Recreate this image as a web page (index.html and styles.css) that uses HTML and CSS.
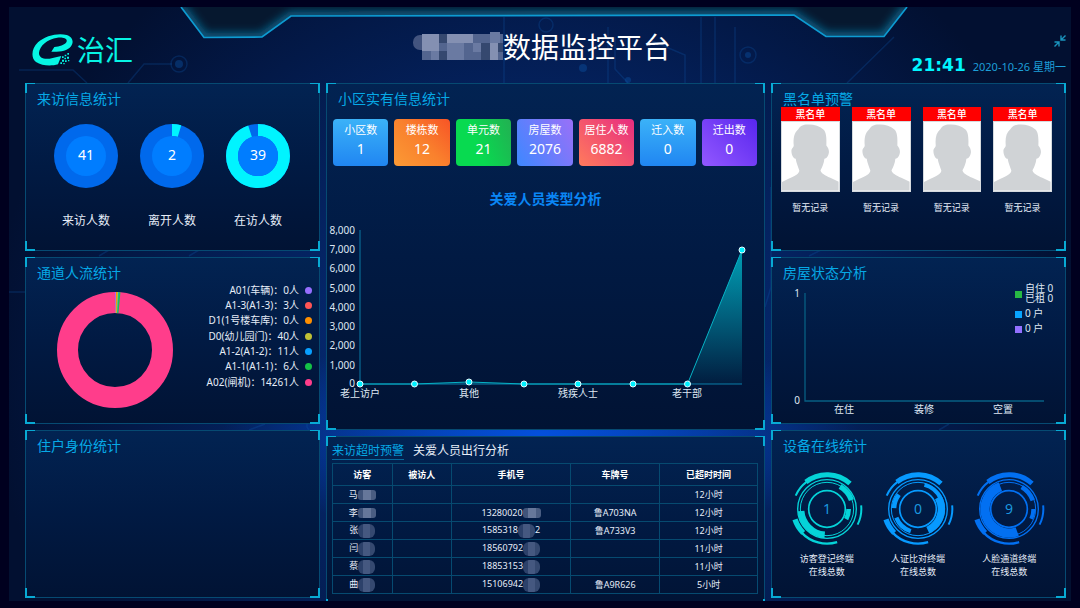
FILE: index.html
```html
<!DOCTYPE html>
<html lang="zh-CN">
<head>
<meta charset="utf-8">
<meta name="viewport" content="width=device-width, initial-scale=1">
<title>数据监控平台</title>
<link rel="stylesheet" href="styles.css">
</head>
<body>
<div class="stage">
  <svg class="traces" viewBox="0 0 1062 594" preserveAspectRatio="none" aria-hidden="true">
    <g fill="none" stroke="#0d55a8" stroke-opacity=".28" stroke-width="1.5">
      <path d="M119 76 135 57H163M495 10V76M599 20V76M606 30V62L619 76M643 34 676 48V76M692 10V76M706 10V76M726 20V76M78 76 64 63H10M885 30 838 76"/>
      <circle cx="170" cy="57" r="8"/><circle cx="218" cy="18" r="6"/><circle cx="739" cy="48" r="8"/><circle cx="537" cy="18" r="7"/>
      <path d="M0 285H16M298 250V420L304 430M90 249 100 243M180 249 190 243M240 423 256 417M800 249 812 243H860M930 423 940 417M756 300 762 280V180"/>
    </g>
    <g fill="#0d55a8" fill-opacity=".4"><circle cx="170" cy="57" r="4"/><circle cx="574" cy="61" r="4"/><circle cx="739" cy="48" r="3"/><circle cx="619" cy="73" r="3"/></g>
  </svg>
  <svg class="crest" viewBox="0 0 1062 34" preserveAspectRatio="none" aria-hidden="true">
    <defs>
      <clipPath id="crestClip"><path d="M172 0 195 30.500 253 30 282 9 785 8 817 29.500H875L898 0Z"/></clipPath>
      <filter id="soft" x="-10%" y="-100%" width="120%" height="300%"><feGaussianBlur stdDeviation="4"/></filter>
    </defs>
    <g clip-path="url(#crestClip)">
      <path d="M172 0H898V34H172Z" fill="#06182f"/>
      <path d="M172 0 195 30.500 253 30 282 9 785 8 817 29.500H875L898 0" fill="none" stroke="#0b6288" stroke-width="9" filter="url(#soft)"/>
    </g>
    <path d="M172 0 195 30.500 253 30 282 9 785 8 817 29.500H875L898 0" fill="none" stroke="#0d9bd2" stroke-width="1.700"/>
  </svg>

  <header class="header">
    <div class="logo">
      <svg class="logo-mark" viewBox="0 0 126 96" aria-hidden="true">
        <path fill="#06f5e4" d="M58 53 67 39C82 38 98 33 103 25 109 13 92 9 76 11 46 15 23 35 21 56 20 74 40 78 62 72L88 66 78 91C58 97 30 96 12 84-4 72-2 44 18 25 40 4 80-4 104 3 124 9 126 26 116 38 106 50 84 54 58 53Z"/>
        <path fill="#06f5e4" d="M90 67h5v5h-5zM98 62h5v5h-5zM106 57h5v5h-5zM97 71h5v5h-5zM105 68h6v6h-6zM90 77h6v6h-6zM99 79h5v5h-5zM85 85h5v5h-5zM108 78h4v4h-4zM94 87h4v4h-4z"/>
      </svg>
      <span class="logo-name">治汇</span>
    </div>
    <h1 class="headline">
      <svg class="headline-mask" viewBox="0 0 90 30" aria-hidden="true">
        <rect x="0" y="3" width="20" height="15" rx="7" fill="#43547f"/>
        <rect x="9" y="2" width="81" height="26" fill="#53658f"/>
        <path fill="#8490b2" d="M9 2h17v17H9zM34 2h26v9H34zM77 11h8v17h-8z"/>
        <path fill="#6a7aa2" d="M34 11h17v17H34zM60 11h8v9h-8zM18 19h8v9h-8zM77 0h10v11H77z"/>
        <path fill="#35486f" d="M26 2h8v9h-8zM26 19h8v9h-8zM68 11h9v17h-9zM85 11h5v9h-5z"/>
      </svg><span>数据监控平台</span>
    </h1>
    <div class="header-side">
      <button class="shrink" type="button" aria-label="退出全屏">
        <svg viewBox="0 0 12 12" aria-hidden="true"><path d="M11.500.500 7.500 4.500M7 .500V5H11.500M.500 11.500 4.500 7.500M.500 7H5V11.500" fill="none" stroke="currentColor" stroke-width="1.400"/></svg>
      </button>
      <div class="clock"><time class="clock-time">21:41</time><span class="clock-date">2020-10-26 星期一</span></div>
    </div>
  </header>

  <main class="board">
    <div class="column">
      <section class="panel">
        <h2 class="panel-title">来访信息统计</h2>
        <div class="visits">
          <figure class="visit">
            <svg viewBox="0 0 64 64"><circle cx="32" cy="32" r="32" fill="#0069ec"/><circle cx="32" cy="32" r="20" fill="#007dff"/><text class="ring-number" x="32" y="36">41</text></svg>
            <figcaption>来访人数</figcaption>
          </figure>
          <figure class="visit">
            <svg viewBox="0 0 64 64"><circle cx="32" cy="32" r="32" fill="#0069ec"/><circle class="slice" cx="32" cy="32" r="26" pathLength="360" stroke="#00f4ff" stroke-width="12" stroke-dasharray="17 343" transform="rotate(-90 32 32)"/><circle cx="32" cy="32" r="20" fill="#007dff"/><text class="ring-number" x="32" y="36">2</text></svg>
            <figcaption>离开人数</figcaption>
          </figure>
          <figure class="visit">
            <svg viewBox="0 0 64 64"><circle cx="32" cy="32" r="32" fill="#0069ec"/><circle class="slice" cx="32" cy="32" r="26" pathLength="360" stroke="#00f4ff" stroke-width="12" stroke-dasharray="342 18" transform="rotate(-90 32 32)"/><circle cx="32" cy="32" r="20" fill="#007dff"/><text class="ring-number" x="32" y="36">39</text></svg>
            <figcaption>在访人数</figcaption>
          </figure>
        </div>
      </section>

      <section class="panel">
        <h2 class="panel-title">通道人流统计</h2>
        <div class="flow">
          <svg class="flow-ring" viewBox="0 0 116 116" role="img" aria-label="通道人流">
            <g class="slice" stroke-width="21" transform="rotate(-90 58 58)">
              <circle cx="58" cy="58" r="47.500" stroke="#ff3d8b"/>
              <circle cx="58" cy="58" r="47.500" pathLength="360" stroke="#1fc24c" stroke-dasharray="5.500 354.500"/>
              <circle cx="58" cy="58" r="47.500" pathLength="360" stroke="#08a0f8" stroke-dasharray="3.700 356.300"/>
              <circle cx="58" cy="58" r="47.500" pathLength="360" stroke="#c0c030" stroke-dasharray="3.200 356.800"/>
              <circle cx="58" cy="58" r="47.500" pathLength="360" stroke="#ff8f00" stroke-dasharray="2 358"/>
              <circle cx="58" cy="58" r="47.500" pathLength="360" stroke="#9a6cff" stroke-dasharray="1 359"/>
            </g>
          </svg>
          <ul class="flow-legend">
            <li>A01(车辆)：0人<i class="dot purple"></i></li>
            <li>A1-3(A1-3)：3人<i class="dot red"></i></li>
            <li>D1(1号楼车库)：0人<i class="dot orange"></i></li>
            <li>D0(幼儿园门)：40人<i class="dot olive"></i></li>
            <li>A1-2(A1-2)：11人<i class="dot blue"></i></li>
            <li>A1-1(A1-1)：6人<i class="dot green"></i></li>
            <li>A02(闸机)：14261人<i class="dot pink"></i></li>
          </ul>
        </div>
      </section>

      <section class="panel">
        <h2 class="panel-title">住户身份统计</h2>
      </section>
    </div>

    <div class="column column-center">
      <section class="panel panel-main">
        <h2 class="panel-title">小区实有信息统计</h2>
        <dl class="totals">
          <div class="total sky"><dt>小区数</dt><dd>1</dd></div>
          <div class="total amber"><dt>楼栋数</dt><dd>12</dd></div>
          <div class="total leaf"><dt>单元数</dt><dd>21</dd></div>
          <div class="total iris"><dt>房屋数</dt><dd>2076</dd></div>
          <div class="total rose"><dt>居住人数</dt><dd>6882</dd></div>
          <div class="total sky"><dt>迁入数</dt><dd>0</dd></div>
          <div class="total violet"><dt>迁出数</dt><dd>0</dd></div>
        </dl>
        <h3 class="chart-title">关爱人员类型分析</h3>
        <svg class="chart" viewBox="0 0 437 220" role="img" aria-label="关爱人员类型分析">
          <defs><linearGradient id="area" x1="0" y1="0" x2="0" y2="1"><stop offset="0" stop-color="#00b6c8" stop-opacity=".85"/><stop offset="1" stop-color="#00b6c8" stop-opacity=".05"/></linearGradient></defs>
          <path d="M33 21V175H415" fill="none" stroke="#075a83" stroke-width="1.500"/>
          <path d="M33 175H87.500L142 173 197 175H360.500L415 41V175Z" fill="url(#area)"/>
          <path d="M33 175H87.500L142 173 197 175H360.500L415 41" fill="none" stroke="#06b3c6" stroke-width="1"/>
          <g class="axis-text end"><text x="28" y="25">8,000</text><text x="28" y="44">7,000</text><text x="28" y="63">6,000</text><text x="28" y="83">5,000</text><text x="28" y="102">4,000</text><text x="28" y="121">3,000</text><text x="28" y="140">2,000</text><text x="28" y="160">1,000</text><text x="28" y="178">0</text></g>
          <g class="points"><circle cx="33" cy="175" r="3"/><circle cx="87.500" cy="175" r="3"/><circle cx="142" cy="173" r="3"/><circle cx="197" cy="175" r="3"/><circle cx="251" cy="175" r="3"/><circle cx="306" cy="175" r="3"/><circle cx="360.500" cy="175" r="3"/><circle cx="415" cy="41" r="3"/></g>
          <g class="axis-text middle"><text x="33" y="188">老上访户</text><text x="142" y="188">其他</text><text x="251" y="188">残疾人士</text><text x="360" y="188">老干部</text></g>
        </svg>
      </section>

      <section class="panel panel-alerts">
        <div class="tabs" role="tablist">
          <button class="tab active" type="button" role="tab" aria-selected="true">来访超时预警</button>
          <button class="tab" type="button" role="tab" aria-selected="false">关爱人员出行分析</button>
        </div>
        <table class="alerts">
          <colgroup><col class="w-name"><col class="w-name"><col class="w-phone"><col class="w-plate"><col class="w-time"></colgroup>
          <thead><tr><th>访客</th><th>被访人</th><th>手机号</th><th>车牌号</th><th>已超时时间</th></tr></thead>
          <tbody>
            <tr><td>马<i class="mask bar"></i></td><td></td><td></td><td></td><td>12小时</td></tr>
            <tr><td>李<i class="mask bar"></i></td><td></td><td>13280020<i class="mask bar"></i></td><td>鲁A703NA</td><td>12小时</td></tr>
            <tr><td>张<i class="mask disc"></i></td><td></td><td>1585318<i class="mask disc"></i>2</td><td>鲁A733V3</td><td>12小时</td></tr>
            <tr><td>闫<i class="mask disc"></i></td><td></td><td>18560792<i class="mask disc"></i></td><td></td><td>11小时</td></tr>
            <tr><td>蔡<i class="mask disc"></i></td><td></td><td>18853153<i class="mask disc"></i></td><td></td><td>11小时</td></tr>
            <tr><td>曲<i class="mask disc"></i></td><td></td><td>15106942<i class="mask disc"></i></td><td>鲁A9R626</td><td>5小时</td></tr>
          </tbody>
        </table>
      </section>
    </div>

    <div class="column">
      <section class="panel">
        <h2 class="panel-title">黑名单预警</h2>
        <svg class="symbols" aria-hidden="true">
          <symbol id="person" viewBox="0 0 174 211"><path fill="#d0d3d6" d="M0 211V184L20 174C40 166 54 158 53 148 50 140 44 126 42 113 33 112 28 96 29 86 30 80 36 78 36 72 34 50 37 33 50 22 58 9 70 8 82 8 100 8 116 14 126 22 136 29 137 50 136 72 141 78 144 84 144 92 143 102 138 112 130 113 128 128 124 138 118 148 120 158 132 164 148 171L174 183V211Z"/></symbol>
        </svg>
        <ul class="blacklist">
          <li><strong>黑名单</strong><svg class="photo" viewBox="0 0 174 211"><use href="#person"/></svg><span>暂无记录</span></li>
          <li><strong>黑名单</strong><svg class="photo" viewBox="0 0 174 211"><use href="#person"/></svg><span>暂无记录</span></li>
          <li><strong>黑名单</strong><svg class="photo" viewBox="0 0 174 211"><use href="#person"/></svg><span>暂无记录</span></li>
          <li><strong>黑名单</strong><svg class="photo" viewBox="0 0 174 211"><use href="#person"/></svg><span>暂无记录</span></li>
        </ul>
      </section>

      <section class="panel">
        <h2 class="panel-title">房屋状态分析</h2>
        <svg class="chart" viewBox="0 0 293 140" role="img" aria-label="房屋状态分析">
          <path d="M33 10V118H272" fill="none" stroke="#075f83" stroke-width="1.300"/>
          <g class="axis-text end"><text x="28" y="14">1</text><text x="28" y="121">0</text></g>
          <g class="axis-text middle"><text x="72" y="130">在住</text><text x="152" y="130">装修</text><text x="231" y="130">空置</text></g>
          <rect x="243" y="8" width="7" height="7" fill="#28b844"/><rect x="243" y="28" width="7" height="7" fill="#08a4ff"/><rect x="243" y="43" width="7" height="7" fill="#9270ff"/>
          <g class="axis-text"><text x="253" y="9">自住 0</text><text x="253" y="19">已租 0</text><text x="253" y="34">0 户</text><text x="253" y="49">0 户</text></g>
        </svg>
      </section>

      <section class="panel">
        <h2 class="panel-title">设备在线统计</h2>
        <svg class="symbols" aria-hidden="true">
          <symbol id="dial" viewBox="-111 -111 222 222">
            <g class="slice" stroke="currentColor">
              <circle r="103" stroke-width="15" pathLength="360" stroke-dasharray="80 280" transform="rotate(-128)"/>
              <circle r="102" stroke-width="6" pathLength="360" stroke-dasharray="30 330" transform="rotate(-157)"/>
              <circle r="101" stroke-width="16" pathLength="360" stroke-dasharray="27 333" transform="rotate(135)"/>
              <circle r="104" stroke-width="7" pathLength="360" stroke-dasharray="64 296" transform="rotate(73)"/>
              <circle r="103" stroke-width="6" pathLength="360" stroke-dasharray="33 327" transform="rotate(-6)"/>
              <circle r="88" stroke-width="4"/><circle r="80" stroke-width="3"/><circle r="55" stroke-width="5"/>
            </g>
          </symbol>
        </svg>
        <div class="devices">
          <figure class="device teal">
            <svg viewBox="-111 -111 222 222">
              <use href="#dial" x="-111" y="-111" width="222" height="222"/>
              <g class="slice" stroke="currentColor"><circle r="78" stroke-width="16" pathLength="360" stroke-dasharray="40 320" transform="rotate(-60)"/><circle r="78" stroke-width="20" pathLength="360" stroke-dasharray="80 280" transform="rotate(95)"/><circle r="65" stroke-width="14" pathLength="360" stroke-dasharray="28 332"/></g>
              <text class="dial-number" y="15">1</text>
            </svg>
            <figcaption>访客登记终端<br>在线总数</figcaption>
          </figure>
          <figure class="device azure">
            <svg viewBox="-111 -111 222 222">
              <use href="#dial" x="-111" y="-111" width="222" height="222"/>
              <g class="slice" stroke="currentColor"><circle r="75" stroke-width="12" pathLength="360" stroke-dasharray="50 310" transform="rotate(-75)"/><circle r="70" stroke-width="22" pathLength="360" stroke-dasharray="95 265" transform="rotate(-30)"/><circle r="70" stroke-width="13" pathLength="360" stroke-dasharray="50 310" transform="rotate(108)"/><circle r="72" stroke-width="14" pathLength="360" stroke-dasharray="35 325" transform="rotate(182)"/></g>
              <text class="dial-number" y="15">0</text>
            </svg>
            <figcaption>人证比对终端<br>在线总数</figcaption>
          </figure>
          <figure class="device royal">
            <svg viewBox="-111 -111 222 222">
              <use href="#dial" x="-111" y="-111" width="222" height="222"/>
              <g class="slice" stroke="currentColor"><circle r="72" stroke-width="28" pathLength="360" stroke-dasharray="178 182" transform="rotate(70)"/><circle r="76" stroke-width="14" pathLength="360" stroke-dasharray="40 320" transform="rotate(-60)"/><circle r="73" stroke-width="12" pathLength="360" stroke-dasharray="24 336"/></g>
              <text class="dial-number" y="15">9</text>
            </svg>
            <figcaption>人脸通道终端<br>在线总数</figcaption>
          </figure>
        </div>
      </section>
    </div>
  </main>
</div>
</body>
</html>
```

FILE: styles.css
```css
*, *::before, *::after { box-sizing: border-box; }

body {
  margin: 0;
  min-height: 100vh;
  padding: 7px 9px;
  display: flex;
  flex-direction: column;
  background: #00001f;
  color: #e6edf8;
  font-family: "Noto Sans", "Noto Sans CJK SC", sans-serif;
  font-size: 10px;
}

h1, h2, h3, ul, dl, dd, figure { margin: 0; padding: 0; font-weight: 400; }
ul { list-style: none; }
svg { display: block; }
button { padding: 0; border: 0; background: none; color: inherit; font: inherit; cursor: pointer; }

.stage {
  position: relative;
  flex: 1;
  display: flex;
  flex-direction: column;
  overflow: hidden;
  background:
    radial-gradient(ellipse 30% 18% at 50% 72%, #0450dc 0%, rgba(4, 72, 200, 0) 100%),
    radial-gradient(ellipse 52% 85% at 50% 60%, #06358f 0%, #04225f 50%, #021031 100%);
}

.traces, .crest { position: absolute; top: 0; left: 0; width: 100%; }
.traces { height: 100%; }
.crest { height: 34px; }
.symbols { position: absolute; width: 0; height: 0; }

/* Header */
.header {
  position: relative;
  display: grid;
  grid-template-columns: 1fr auto 1fr;
  min-height: 76px;
  padding: 0 5px 0 9px;
}
.logo { display: flex; align-items: flex-start; gap: 3px; padding: 27px 0 0 14px; }
.logo-mark { width: 42px; height: 32px; }
.logo-name { color: #06f5e4; font-size: 28px; line-height: 32px; }
.headline {
  display: flex;
  align-items: flex-start;
  padding-top: 20px;
  color: #fff;
  font-size: 28px;
  line-height: 40px;
}
.headline-mask { width: 90px; height: 30px; margin-top: 5px; }
.header-side { display: flex; flex-direction: column; align-items: flex-end; padding-top: 28px; }
.shrink { width: 12px; height: 12px; color: #1a94bd; }
.clock { display: flex; align-items: baseline; gap: 7px; padding-top: 8px; line-height: 20px; }
.clock-time { color: #00f6ff; font: 700 17px/20px "DejaVu Sans", sans-serif; }
.clock-date { color: #1d9fd8; font-size: 11px; }

/* Panels */
.board {
  position: relative;
  flex: 1;
  display: grid;
  grid-template-columns: minmax(0, 295fr) minmax(0, 439fr) minmax(0, 295fr);
  gap: 6px;
  padding: 0 5px 0 16px;
}
.column { display: flex; flex-direction: column; gap: 6px; padding-bottom: 3px; }
.column-center { padding-bottom: 0; margin-bottom: -8px; }
.panel {
  --tick: #08aad4;
  position: relative;
  flex: 1 1 0;
  padding-top: 5px;
  border: 1px solid #064a72;
  background: linear-gradient(#022352, #011a43 50%, #011334);
}
.panel::before {
  content: "";
  position: absolute;
  inset: -1px;
  pointer-events: none;
  background:
    linear-gradient(var(--tick), var(--tick)) 0 0 / 10px 1px,
    linear-gradient(var(--tick), var(--tick)) 0 0 / 2px 10px,
    linear-gradient(var(--tick), var(--tick)) 100% 0 / 10px 1px,
    linear-gradient(var(--tick), var(--tick)) 100% 0 / 2px 10px,
    linear-gradient(var(--tick), var(--tick)) 0 100% / 10px 2px,
    linear-gradient(var(--tick), var(--tick)) 0 100% / 2px 10px,
    linear-gradient(var(--tick), var(--tick)) 100% 100% / 10px 2px,
    linear-gradient(var(--tick), var(--tick)) 100% 100% / 2px 10px;
  background-repeat: no-repeat;
}
.panel-main { flex: none; }
.panel-title { padding-left: 11px; color: #06a9e6; font-size: 14px; line-height: 20px; }

.slice { fill: none; }
.ring-number { fill: #fff; font-size: 14px; text-anchor: middle; }

/* Visits */
.visits { display: grid; grid-template-columns: repeat(3, 1fr); padding: 15px 18px 0 17px; }
.visit { display: flex; flex-direction: column; align-items: center; gap: 24px; font-size: 12px; line-height: 18px; }
.visit svg { width: 64px; height: 64px; }

/* Channel flow */
.flow { display: flex; justify-content: space-between; padding: 0 7px 0 31px; }
.flow-ring { width: 116px; height: 116px; margin-top: 9px; }
.flow-legend { display: flex; flex-direction: column; justify-content: space-between; height: 107px; line-height: 15px; }
.flow-legend li { display: flex; align-items: center; justify-content: flex-end; gap: 6px; }
.dot { width: 7px; height: 7px; border-radius: 50%; }
.purple { background: #966eff; }
.red { background: #ff5555; }
.orange { background: #ff8f00; }
.olive { background: #bfc136; }
.blue { background: #08a0ff; }
.green { background: #14c247; }
.pink { background: #ff3d8b; }

/* Totals */
.totals { display: grid; grid-template-columns: repeat(7, minmax(0, 1fr)); gap: 6px; padding: 10px 7px 0 6px; }
.total { height: 47px; padding-top: 3px; border-radius: 4px; color: #fff; text-align: center; }
.total dt { font-size: 11px; line-height: 16px; white-space: nowrap; }
.total dd { font-size: 14px; line-height: 22px; }
.sky { background: linear-gradient(#3bb2f8, #2086f2); }
.amber { background: linear-gradient(45deg, #fb9a35, #f9812d 50%, #f85426); }
.leaf { background: linear-gradient(70deg, #08da50 40%, #22b052); }
.iris { background: linear-gradient(60deg, #3d88ff, #9a70f8); }
.rose { background: linear-gradient(45deg, #ff7b5c, #e72c80); }
.violet { background: linear-gradient(45deg, #9258ff, #5926ee); }

/* Charts */
.chart-title { padding-top: 23px; color: #0a86f5; font-size: 14px; line-height: 20px; font-weight: 700; text-align: center; }
.chart { width: 100%; height: auto; overflow: visible; }
.axis-text { fill: #dfe7f3; font-size: 10px; }
.end { text-anchor: end; }
.middle { text-anchor: middle; }
.points { fill: #00f0ff; stroke: #e8fbff; stroke-width: 1; }

/* Overtime alerts */
.panel-alerts { padding: 5px 6px 0 5px; }
.tabs { display: flex; gap: 9px; font-size: 12px; line-height: 17px; }
.tab { color: #e8eef8; border-bottom: 1px solid transparent; }
.tab.active { color: #06a9e6; border-bottom-color: #07699c; }
.alerts { width: 100%; margin-top: 3px; border-collapse: collapse; table-layout: fixed; font-size: 9px; line-height: 14px; }
.alerts th, .alerts td { height: 18px; padding: 0; border: 1px solid #064a70; text-align: center; white-space: nowrap; }
.alerts th { height: 22px; color: #fff; font-weight: 700; }
.w-name { width: 14%; }
.w-phone { width: 28%; }
.w-plate { width: 21%; }
.w-time { width: 23%; }
.mask {
  display: inline-block;
  vertical-align: middle;
  background: linear-gradient(90deg, #40547a 30%, #66779a 30% 70%, #4a5d82 70%);
}
.bar { width: 18px; height: 10px; border-radius: 3px; }
.disc { width: 17px; height: 14px; border-radius: 6px; background: linear-gradient(90deg, #2c416a 30%, #455880 30% 70%, #354970 70%); }

/* Blacklist */
.blacklist { position: relative; display: grid; grid-template-columns: repeat(4, minmax(0, 1fr)); gap: 12px; margin-top: -2px; padding: 0 13px 0 9px; text-align: center; }
.blacklist li { display: flex; flex-direction: column; }
.blacklist strong { background: #f00; color: #fff; font-weight: 500; line-height: 14px; }
.photo { width: 100%; height: auto; border: 1px solid #d5dade; background: #fff; }
.blacklist span { padding-top: 9px; font-size: 9px; line-height: 14px; }

/* Devices */
.devices { display: grid; grid-template-columns: repeat(3, 1fr); padding: 16px 10px 0 9px; }
.device { display: flex; flex-direction: column; align-items: center; gap: 6px; font-size: 9px; line-height: 13px; text-align: center; }
.device svg { width: 74px; height: 74px; }
.device figcaption { color: #e6edf8; }
.teal { color: #05d3d8; }
.azure { color: #079aff; }
.royal { color: #0270f2; }
.dial-number { fill: #1b97df; font-size: 42px; text-anchor: middle; }
```
